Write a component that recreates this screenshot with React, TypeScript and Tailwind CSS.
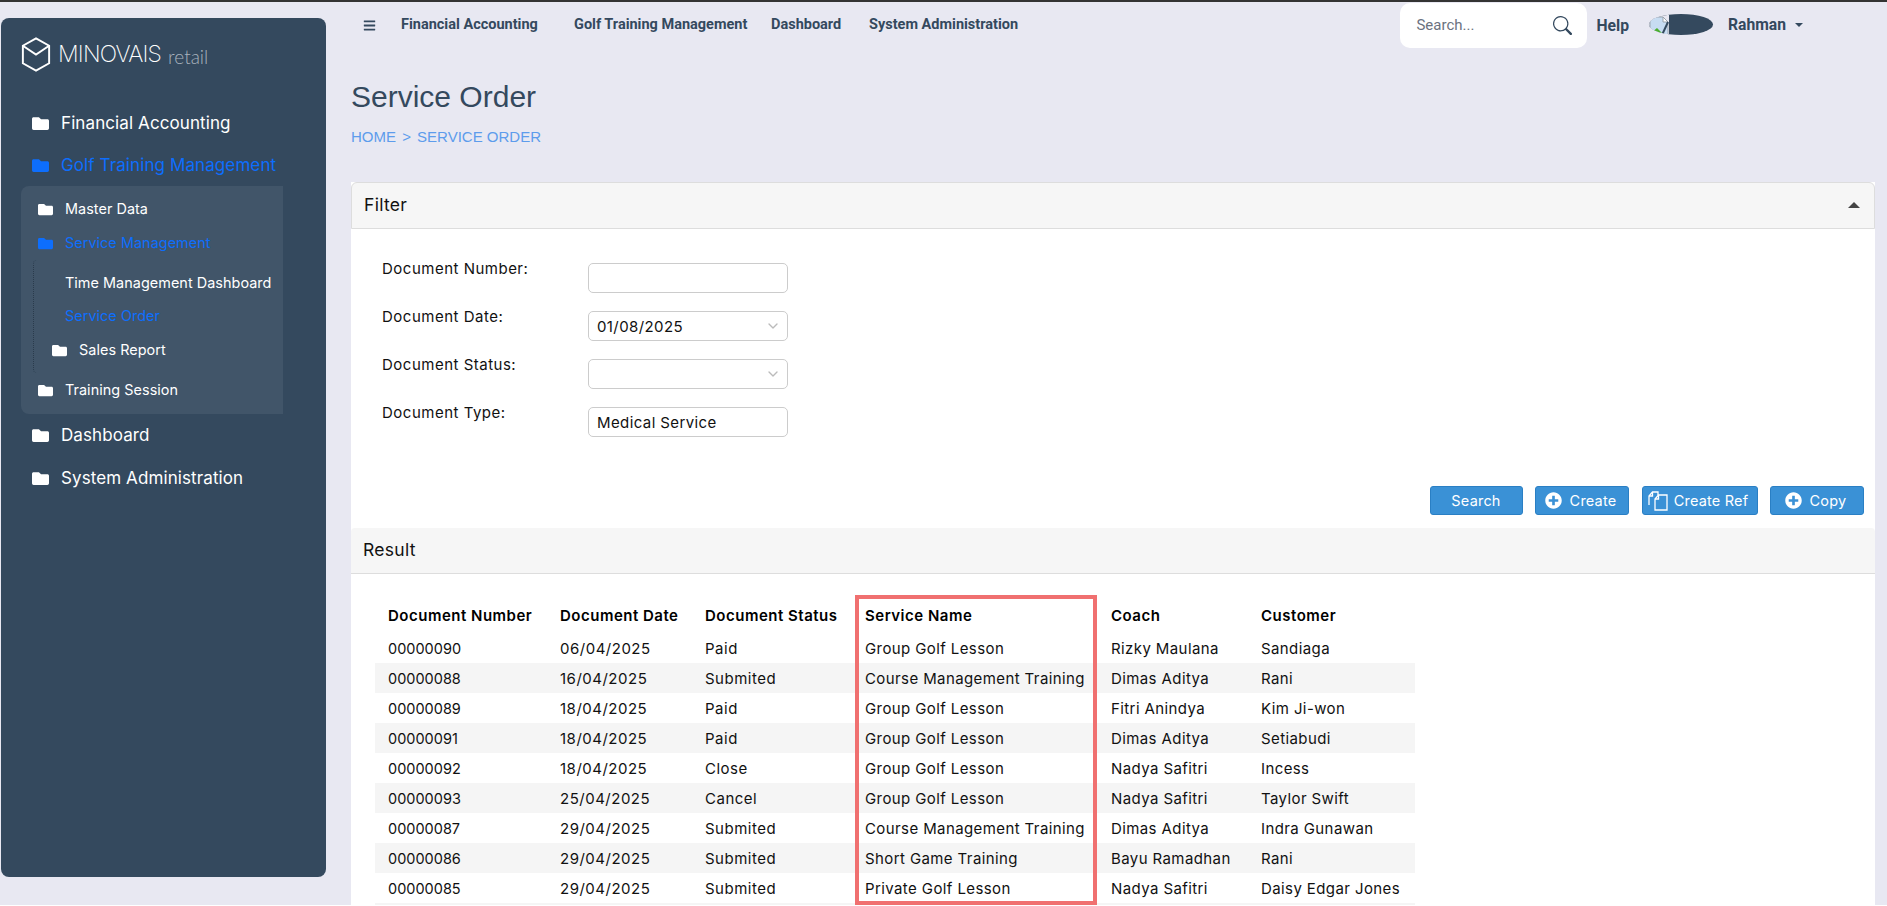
import type { ReactNode } from "react";
import { FaFolder, FaBars, FaPlusCircle } from "react-icons/fa";
import { BsSearch } from "react-icons/bs";
import { ChevronDown } from "lucide-react";

const rows = [
  ["00000090", "06/04/2025", "Paid", "Group Golf Lesson", "Rizky Maulana", "Sandiaga"],
  ["00000088", "16/04/2025", "Submited", "Course Management Training", "Dimas Aditya", "Rani"],
  ["00000089", "18/04/2025", "Paid", "Group Golf Lesson", "Fitri Anindya", "Kim Ji-won"],
  ["00000091", "18/04/2025", "Paid", "Group Golf Lesson", "Dimas Aditya", "Setiabudi"],
  ["00000092", "18/04/2025", "Close", "Group Golf Lesson", "Nadya Safitri", "Incess"],
  ["00000093", "25/04/2025", "Cancel", "Group Golf Lesson", "Nadya Safitri", "Taylor Swift"],
  ["00000087", "29/04/2025", "Submited", "Course Management Training", "Dimas Aditya", "Indra Gunawan"],
  ["00000086", "29/04/2025", "Submited", "Short Game Training", "Bayu Ramadhan", "Rani"],
  ["00000085", "29/04/2025", "Submited", "Private Golf Lesson", "Nadya Safitri", "Daisy Edgar Jones"],
];

const columns = [
  { label: "Document Number", width: "w-[172px]", cell: "text-[14.5px]" },
  { label: "Document Date", width: "w-[145px]", cell: "text-[15px] tracking-[0.5px]" },
  { label: "Document Status", width: "w-[160px]", cell: "text-[15px] tracking-[0.5px]" },
  { label: "Service Name", width: "w-[246px]", cell: "text-[15px] tracking-[0.4px]" },
  { label: "Coach", width: "w-[150px]", cell: "text-[15px] tracking-[0.4px]" },
  { label: "Customer", width: "w-[167px]", cell: "text-[15px] tracking-[0.4px]" },
];

function Logo() {
  return (
    <div className="flex items-center h-[84px] pl-[20px] pb-[12px]">
      <svg width="30" height="35" viewBox="0 0 30 36" fill="none" stroke="#fff" strokeWidth="2">
        <path d="M15 1.5 28.5 9v18L15 34.5 1.5 27V9z" />
        <path d="M1.5 9 15 18 28.5 9" />
      </svg>
      <span className="ml-[7px] text-[23px] tracking-[-0.8px] leading-none font-extralight text-white">MINOVAIS</span>
      <span className="ml-[7px] mt-[4px] text-[19px] leading-none font-light text-[#a9b3bd] font-[Lato,sans-serif]">retail</span>
    </div>
  );
}

function TopItem({ label, active }: { label: string; active?: boolean }) {
  return (
    <div className={`flex items-center h-[43px] pl-[31px] text-[17px] tracking-[0.1px] ${active ? "text-[#0d6efd]" : "text-white"}`}>
      <FaFolder className="w-[17px] h-[17px] shrink-0" />
      <span className="ml-[12px]">{label}</span>
    </div>
  );
}

function SubItem({ label, active, indent, folder = true }: { label: string; active?: boolean; indent?: boolean; folder?: boolean }) {
  return (
    <div
      className={`flex items-center h-[34px] text-[14.4px] tracking-[0.05px] ${indent ? "pl-[31px]" : "pl-[17px]"} ${active ? "text-[#0d6efd]" : "text-white"}`}
    >
      {folder && <FaFolder className="w-[15px] h-[15px] shrink-0 mr-[12px]" />}
      <span className={folder ? "" : "pl-[27px]"}>{label}</span>
    </div>
  );
}

function Sidebar() {
  return (
    <aside className="ml-px mt-4 w-[325px] h-[859px] shrink-0 rounded-lg bg-[#34495e]">
      <Logo />
      <TopItem label="Financial Accounting" />
      <div className="-mt-px">
        <TopItem label="Golf Training Management" active />
      </div>
      <div className="-mt-px ml-[20px] w-[262px] h-[228px] rounded-l-lg bg-[#415569] pt-[6px]">
        <SubItem label="Master Data" />
        <SubItem label="Service Management" active />
        <div className="ml-[12px] h-[113px] border-l border-dotted border-[#2a3b4c] rounded-l pt-[6px]">
          <div className="-ml-[13px]">
            <SubItem label="Time Management Dashboard" folder={false} />
            <div className="-mt-px">
              <SubItem label="Service Order" active folder={false} />
            </div>
            <SubItem label="Sales Report" indent />
          </div>
        </div>
        <SubItem label="Training Session" />
      </div>
      <TopItem label="Dashboard" />
      <TopItem label="System Administration" />
    </aside>
  );
}

function Header() {
  return (
    <header className="flex items-center h-[46px] mt-px">
      <FaBars className="ml-[12px] w-[13px] h-[13px] text-[#34495e]" />
      <nav className="flex text-[14.5px] font-bold text-[#34495e] font-[Roboto,sans-serif] -mt-[2px]">
        <a className="ml-[25px] w-[173px]">Financial Accounting</a>
        <a className="w-[197px]">Golf Training Management</a>
        <a className="w-[98px]">Dashboard</a>
        <a>System Administration</a>
      </nav>
      <div className="ml-auto flex items-center w-[187px] h-[45px] rounded-[10px] bg-white">
        <span className="ml-[16px] text-[15px] text-[#6b7280] font-[Roboto,sans-serif]">Search...</span>
        <BsSearch className="ml-auto mr-[15px] w-[19px] h-[19px] text-[#34495e]" />
      </div>
      <a className="ml-[9px] text-[15.7px] font-bold text-[#34495e] font-[Roboto,sans-serif]">Help</a>
      <div className="relative ml-[20px] w-[64px] h-[21px] rounded-[50%] bg-[#34495e] overflow-hidden -mt-[3px]">
        <svg className="absolute left-0 top-0" width="20" height="21" viewBox="0 0 20 21">
          <rect width="20" height="21" fill="#e8e8f2" />
          <path d="M1 3h13l5 5v13H1z" fill="#c7dcf2" stroke="#9aa3ad" strokeWidth="1" />
          <path d="M2 19l6-5 5 5z" fill="#4caf2f" />
          <path d="M14 3v5h5z" fill="#fff" stroke="#9aa3ad" strokeWidth="1" />
          <path d="M19 8 13 21" stroke="#34495e" strokeWidth="2" />
        </svg>
      </div>
      <span className="ml-[15px] text-[15.7px] font-bold text-[#34495e] font-[Roboto,sans-serif] -mt-[2px]">Rahman</span>
      <svg className="ml-[9px] -mt-[2px]" width="8" height="4" viewBox="0 0 8 4">
        <path d="M0 0h8L4 4z" fill="#34495e" />
      </svg>
      <div className="w-[72px]" />
    </header>
  );
}

function Field({ label, value, select }: { label: string; value?: string; select?: boolean }) {
  return (
    <div className="flex items-start h-[30px]">
      <label className="w-[206px] -mt-[4px] leading-5 text-[15px] tracking-[0.5px] text-[#111]">{label}</label>
      <div className="flex items-center w-[200px] h-[30px] rounded-[5px] border border-[#ccc] bg-white px-2">
        <span className="pt-[2px] text-[15px] tracking-[0.4px] text-[#111]">{value}</span>
        {select && <ChevronDown className="ml-auto -mr-[2px] w-[16px] h-[16px] text-[#bbb]" />}
      </div>
    </div>
  );
}

function Btn({ width, children }: { width: string; children: ReactNode }) {
  return (
    <button className={`flex items-center justify-center gap-[8px] h-[29px] ${width} rounded-[3px] border border-[#2a7fc4] bg-[#3a91d6] text-[14.5px] tracking-[0.2px] text-white`}>
      {children}
    </button>
  );
}

function CopyDocs() {
  return (
    <svg width="20" height="20" viewBox="0 0 20 20" fill="none" stroke="#fff" strokeWidth="1.3" className="-mr-[2px]">
      <path d="M1 14V5l3.5-4H10v3" />
      <path d="M4.5 1v4H1" />
      <path d="M7 19V8l3.5-4H19v15z" fill="#3a91d6" />
      <path d="M10.5 4v4H7" />
    </svg>
  );
}

function Card() {
  return (
    <section className="flex-1 flex flex-col bg-white text-[14px] mt-[134px]">
      <div className="flex items-center justify-between h-[47px] pb-[1px] px-[12px] rounded-t-md border border-[#ddd] bg-[#f6f6f6]">
        <span className="text-[17.5px] tracking-[0.3px] text-[#111]">Filter</span>
        <svg width="12" height="6" viewBox="0 0 12 6" className="mr-[2px]">
          <path d="M0 6h12L6 0z" fill="#444" />
        </svg>
      </div>
      <div className="flex flex-col gap-[18px] pt-[34px] pl-[31px]">
        <Field label="Document Number:" />
        <Field label="Document Date:" value="01/08/2025" select />
        <Field label="Document Status:" select />
        <Field label="Document Type:" value="Medical Service" />
      </div>
      <div className="flex justify-end gap-[12.5px] mt-[49px] pr-[11px]">
        <Btn width="w-[93px]">Search</Btn>
        <Btn width="w-[94px] pr-[3px]">
          <FaPlusCircle className="w-[17px] h-[17px]" />
          Create
        </Btn>
        <Btn width="w-[116px] pr-[3px]">
          <CopyDocs />
          Create Ref
        </Btn>
        <Btn width="w-[94px] pr-[3px]">
          <FaPlusCircle className="w-[17px] h-[17px]" />
          Copy
        </Btn>
      </div>
      <div className="flex items-center h-[46px] mt-[13px] px-[12px] rounded-t border-b border-[#ddd] bg-[#f6f6f6]">
        <span className="text-[17.5px] tracking-[0.3px] text-[#111]">Result</span>
      </div>
      <div className="relative ml-[24px] mt-[25px] w-[1040px]">
        <table className="w-full table-fixed border-collapse text-[#111]">
          <thead>
            <tr className="h-[34px]">
              {columns.map((c) => (
                <th key={c.label} className={`${c.width} pl-[13px] pt-[1px] text-left text-[15px] tracking-[0.5px] font-semibold text-black`}>
                  {c.label}
                </th>
              ))}
            </tr>
          </thead>
          <tbody>
            {rows.map((r, i) => (
              <tr key={r[0]} className={`h-[30px] ${i % 2 === 1 ? "bg-[#f5f5f5]" : ""}`}>
                {r.map((v, j) => (
                  <td key={j} className={`pl-[13px] pt-[2px] whitespace-nowrap ${columns[j].cell}`}>
                    {v}
                  </td>
                ))}
              </tr>
            ))}
            <tr className="h-[30px] bg-[#f5f5f5]">
              <td colSpan={6} />
            </tr>
          </tbody>
        </table>
        {/* highlight around the Service Name column */}
        <div className="absolute left-[480px] -top-[4px] w-[242px] h-[310px] border-[4px] border-[#f07070] pointer-events-none" />
      </div>
    </section>
  );
}

export default function App() {
  return (
    <div className="h-[905px] overflow-hidden flex border-t-2 border-[#333] bg-[#e8e8f2] font-[Inter,sans-serif]">
      <Sidebar />
      <main className="relative flex flex-col ml-[25px] w-[1524px]">
        <Header />
        <div className="absolute left-0 top-[75px] font-['Liberation_Sans',sans-serif]">
          <h1 className="text-[30px] leading-[40px] text-[#34495e]">Service Order</h1>
          <p className="mt-[10px] text-[15px] leading-[20px] text-[#5d9cec]">
            HOME<span className="mx-[2px]"> &gt; </span>SERVICE ORDER
          </p>
        </div>
        <Card />
      </main>
    </div>
  );
}
